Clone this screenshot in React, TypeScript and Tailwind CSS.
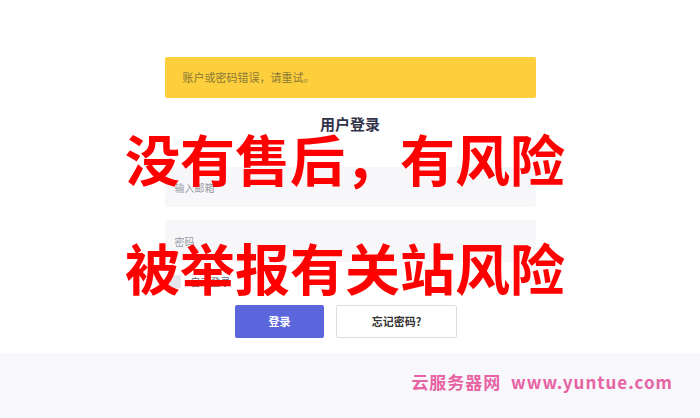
import React from "react";

const cjk = { fontFamily: '"Noto Sans CJK SC", "Noto Sans", sans-serif' };

export default function App() {
  return (
    <div className="relative w-[700px] h-[418px] bg-white overflow-hidden" style={cjk}>
      <div className="h-[353px] bg-white flex flex-col items-center pt-[57px]">
        <div className="w-[371px] h-[41px] bg-[#fdcf3c] rounded-[2px] flex items-center pl-[18px] text-[11px] text-[#8c7838]">
          账户或密码错误，请重试。
        </div>
        <div className="mt-[16px] h-[20px] text-[15px] font-bold text-[#33334a] leading-[20px]">用户登录</div>
        <div className="mt-[33px] w-[371px] h-[40px] bg-[#f7f7fa] rounded-[2px] flex items-center pl-[10px] text-[10px] text-[#9a9aa2]">
          输入邮箱
        </div>
        <div className="mt-[13px] w-[371px] h-[42px] bg-[#f7f7fa] rounded-[2px] flex items-center pl-[10px] text-[10px] text-[#9a9aa2]">
          密码
        </div>
        <div className="mt-[13px] h-[13px] w-[371px] flex items-center gap-[10px] pl-[3px]">
          <div className="w-[13px] h-[13px] rounded-[2px] bg-[#e4e5ea]"></div>
          <span className="text-[10px] leading-[13px] text-[#666]">自动登录</span>
        </div>
        <div className="mt-[17px] mr-[8px] flex gap-[12px]">
          <button className="w-[89px] h-[33px] rounded-[2px] bg-[#5b66dd] text-white text-[11px] font-bold">登录</button>
          <button className="w-[121px] h-[33px] rounded-[2px] bg-white border border-[#dcdce0] text-[#333] text-[11px] font-bold">忘记密码?</button>
        </div>
      </div>
      <div className="h-[65px] bg-[#f8f7fc] flex items-start justify-end pr-[27px] pt-[16px]">
        <span className="text-[17px] font-bold text-[#e763a3] tracking-[1px]">云服务器网&nbsp;&nbsp;www.yuntue.com</span>
      </div>
      <div className="absolute left-[125px] top-[124px] text-[55px] leading-[66px] font-bold text-[#ff0000] whitespace-nowrap">
        没有售后，有风险
      </div>
      <div className="absolute left-[125px] top-[233px] text-[55px] leading-[66px] font-bold text-[#ff0000] whitespace-nowrap">
        被举报有关站风险
      </div>
    </div>
  );
}
